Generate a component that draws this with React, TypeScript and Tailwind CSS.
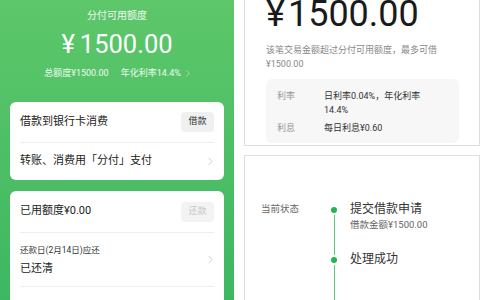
import React from "react";

const Chevron = ({ className = "" }: { className?: string }) => (
  <svg width="6" height="10" viewBox="0 0 6 10" className={className} fill="none">
    <path d="M1 1l4 4-4 4" stroke="currentColor" strokeWidth="1" strokeLinecap="round" strokeLinejoin="round" />
  </svg>
);

export default function App() {
  const font = { fontFamily: 'Roboto, "Noto Sans CJK SC", sans-serif' };
  return (
    <div className="w-[480px] h-[300px] overflow-hidden flex bg-white" style={font}>
      {/* Left panel */}
      <div className="w-[234px] h-full flex flex-col items-center bg-gradient-to-b from-[#5dc76a] to-[#3db762]">
        <div className="mt-[9px] text-[10px] leading-[14px] text-white/90">分付可用额度</div>
        <div className="mt-[9px] flex items-baseline text-[25.5px] leading-[24px] text-white">
          <span>¥</span>
          <span className="ml-[5px]">1500.00</span>
        </div>
        <div className="mt-[11px] flex items-center text-[9px] leading-[12px] text-white/90">
          <span>总额度¥1500.00</span>
          <span className="ml-[12px]">年化利率14.4%</span>
          <Chevron className="ml-[5px] w-[4px] h-[7px] text-white/70" />
        </div>
        <div className="mt-[23px] w-[214px] bg-white rounded-[6px] px-[10px]">
          <div className="h-[41px] flex items-center justify-between border-b border-[#eeeeee]">
            <span className="text-[11px] text-[#222]">借款到银行卡消费</span>
            <span className="w-[33px] h-[20px] rounded-[4px] bg-[#f0f0f0] text-[9px] text-[#333] flex items-center justify-center">借款</span>
          </div>
          <div className="h-[37px] flex items-center justify-between">
            <span className="text-[11px] text-[#222]">转账、消费用「分付」支付</span>
            <Chevron className="w-[5px] h-[9px] text-[#c4c4c4] mr-[1px]" />
          </div>
        </div>
        <div className="mt-[11px] w-[214px] flex-1 bg-white rounded-t-[6px] px-[10px]">
          <div className="h-[42px] flex items-center justify-between border-b border-[#eeeeee]">
            <span className="text-[11px] text-[#222]">已用额度¥0.00</span>
            <span className="w-[33px] h-[20px] rounded-[4px] bg-[#f3f3f3] text-[9px] text-[#c8c8c8] flex items-center justify-center">还款</span>
          </div>
          <div className="h-[54px] flex items-center justify-between border-b border-[#eeeeee]">
            <div className="flex flex-col">
              <span className="text-[8.5px] leading-[12px] text-[#333]">还款日(2月14日)应还</span>
              <span className="mt-[6px] text-[11px] leading-[14px] text-[#222]">已还清</span>
            </div>
            <Chevron className="w-[5px] h-[9px] text-[#c4c4c4] mr-[1px]" />
          </div>
        </div>
      </div>

      {/* Right panel */}
      <div className="ml-[10px] w-[236px] h-full flex flex-col">
        <div className="h-[146px] border-x border-b border-[#dedede] pl-[21px] pr-[20px] flex flex-col">
          <div className="-mt-[3px] flex items-baseline text-[36px] leading-[34px] text-[#1a1a1a]">
            <span>¥</span>
            <span className="ml-[3px]">1500.00</span>
          </div>
          <div className="mt-[12px] text-[9px] leading-[14px] text-[#8a8a8a]">
            该笔交易金额超过分付可用额度，最多可借
            <br />
            ¥1500.00
          </div>
          <div className="mt-[8px] h-[64px] rounded-[6px] bg-[#f7f7f7] pl-[11px] pt-[10px] text-[9px] leading-[14px]">
            <div className="flex">
              <span className="w-[47px] text-[#999]">利率</span>
              <span className="w-[105px] text-[#333]">日利率0.04%，年化利率14.4%</span>
            </div>
            <div className="flex mt-[4px]">
              <span className="w-[47px] text-[#999]">利息</span>
              <span className="text-[#333]">每日利息¥0.60</span>
            </div>
          </div>
        </div>
        <div className="mt-[9px] flex-1 border-x border-t border-[#dedede] pl-[16px] pt-[46px] flex">
          <div className="w-[70px] text-[9.5px] leading-[14px] text-[#666]">当前状态</div>
          <div className="flex flex-col items-center w-[6px] pt-[5px]">
            <div className="w-[6px] h-[6px] rounded-full bg-[#22b554]" />
            <div className="w-[1px] h-[40px] bg-[#5cc878] mt-[2px]" />
            <div className="w-[6px] h-[6px] rounded-full bg-[#22b554] mt-[2px]" />
            <div className="w-[1px] flex-1 bg-[#5cc878] mt-[2px]" />
          </div>
          <div className="ml-[13px] flex flex-col">
            <span className="text-[12px] leading-[14px] text-[#333]">提交借款申请</span>
            <span className="mt-[2px] text-[9.5px] leading-[14px] text-[#666]">借款金额¥1500.00</span>
            <span className="mt-[20px] text-[12px] leading-[14px] text-[#333]">处理成功</span>
          </div>
        </div>
      </div>
    </div>
  );
}
